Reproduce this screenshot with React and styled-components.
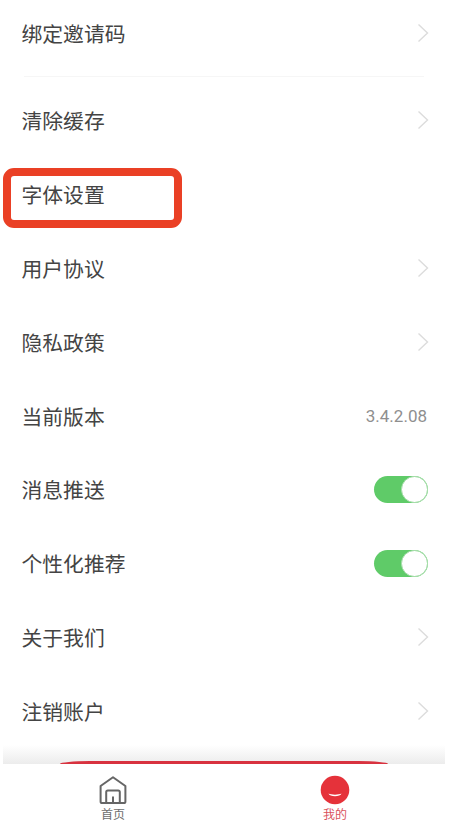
import React from "react";
import styled, { createGlobalStyle } from "styled-components";

const GlobalStyle = createGlobalStyle`
  html, body {
    margin: 0;
    padding: 0;
    background: #fff;
    font-family: "Noto Sans CJK SC", "Noto Sans", sans-serif;
  }
`;

const Page = styled.div`
  width: 448px;
  height: 836px;
  overflow: hidden;
`;

const Row = styled.div`
  position: relative;
  display: flex;
  align-items: center;
  justify-content: space-between;
  box-sizing: border-box;
  height: ${({ $first }) => ($first ? "68px" : "73.85px")};
  padding: 0 20px 1.4px 21.5px;
`;

const Label = styled.span`
  font-size: 20.8px;
  line-height: 28px;
  color: #444;
`;

const Chevron = styled.svg`
  display: block;
  width: 12px;
  height: 20px;
  margin-right: -1px;
  fill: none;
  stroke: #dcdcdc;
  stroke-width: 1.4;
`;

const Divider = styled.div`
  height: 1px;
  margin: 8px 24px 7px;
  background: #f6f6f6;
`;

const Highlight = styled.div`
  position: absolute;
  top: 10px;
  left: 3px;
  box-sizing: border-box;
  width: 179px;
  height: 60px;
  border: 8px solid #ea4025;
  border-radius: 11px;
`;

const Version = styled.span`
  margin-right: 1px;
  font-family: Roboto, "Noto Sans", sans-serif;
  font-size: 17px;
  color: #8f8f8f;
`;

const Toggle = styled.div`
  display: flex;
  justify-content: flex-end;
  box-sizing: border-box;
  width: 54px;
  height: 27px;
  border-radius: 14px;
  background: #5fcb68;
`;

const Knob = styled.div`
  box-sizing: border-box;
  width: 27px;
  height: 27px;
  border: 1px solid #a5dca9;
  border-radius: 50%;
  background: #fff;
`;

const Fade = styled.div`
  position: relative;
  height: 19.35px;
  margin: -4px 3px 0;
  background: linear-gradient(to bottom, rgba(238, 238, 238, 0), #ececec);
`;

const ButtonEdge = styled.div`
  position: absolute;
  left: 57px;
  right: 57px;
  bottom: 0;
  height: 3px;
  border-radius: 30px 30px 0 0 / 3px 3px 0 0;
  background: #d8323f;
`;

const Nav = styled.nav`
  display: grid;
  grid-template-columns: 222px 222px;
  height: 72px;
  padding: 0 2px;
`;

const NavItem = styled.div`
  display: flex;
  flex-direction: column;
  align-items: center;
  padding-top: 11px;
`;

const NavIcon = styled.svg`
  display: block;
  width: 30px;
  height: 30px;
`;

const NavLabel = styled.span`
  font-size: 12px;
  line-height: 18px;
  color: ${({ $active }) => ($active ? "#d9525c" : "#6e6e6e")};
`;

const rows = [
  { label: "绑定邀请码", first: true, arrow: true },
  { divider: true },
  { label: "清除缓存", arrow: true },
  { label: "字体设置", marked: true },
  { label: "用户协议", arrow: true },
  { label: "隐私政策", arrow: true },
  { label: "当前版本", version: "3.4.2.08" },
  { label: "消息推送", toggle: true },
  { label: "个性化推荐", toggle: true },
  { label: "关于我们", arrow: true },
  { label: "注销账户", arrow: true },
];

const Arrow = () => (
  <Chevron viewBox="0 0 12 20">
    <path d="M1.5 1.5 10.5 10 1.5 18.5" />
  </Chevron>
);

const HomeIcon = () => (
  <NavIcon viewBox="0 0 30 30" fill="none" stroke="#666" strokeWidth="2" strokeLinejoin="round">
    <path d="M15 2.2 2.6 11V26.4C2.6 27.4 3.2 28 4.2 28H25.8C26.8 28 27.4 27.4 27.4 26.4V11Z" />
    <path d="M8.2 28V17C8.2 16 8.8 15.5 9.8 15.5H20.2C21.2 15.5 21.8 16 21.8 17V28" />
    <path d="M15 21.5V28" />
  </NavIcon>
);

const MineIcon = () => (
  <NavIcon viewBox="0 0 30 30">
    <circle cx="15" cy="15" r="14.3" fill="#e5323a" />
    <path d="M8.5 18.5C11 20 19 20 21.5 18.5 20.5 22 9.5 22 8.5 18.5Z" fill="#fff" />
  </NavIcon>
);

const App = () => {
  return (
    <Page>
      <GlobalStyle />
      {rows.map((row, i) =>
        row.divider ? (
          <Divider key={i} />
        ) : (
          <Row key={i} $first={row.first}>
            <Label>{row.label}</Label>
            {row.arrow && <Arrow />}
            {row.version && <Version>{row.version}</Version>}
            {row.toggle && (
              <Toggle>
                <Knob />
              </Toggle>
            )}
            {row.marked && <Highlight />}
          </Row>
        )
      )}
      <Fade>
        <ButtonEdge />
      </Fade>
      <Nav>
        <NavItem>
          <HomeIcon />
          <NavLabel>首页</NavLabel>
        </NavItem>
        <NavItem>
          <MineIcon />
          <NavLabel $active>我的</NavLabel>
        </NavItem>
      </Nav>
    </Page>
  );
};

export default App;
